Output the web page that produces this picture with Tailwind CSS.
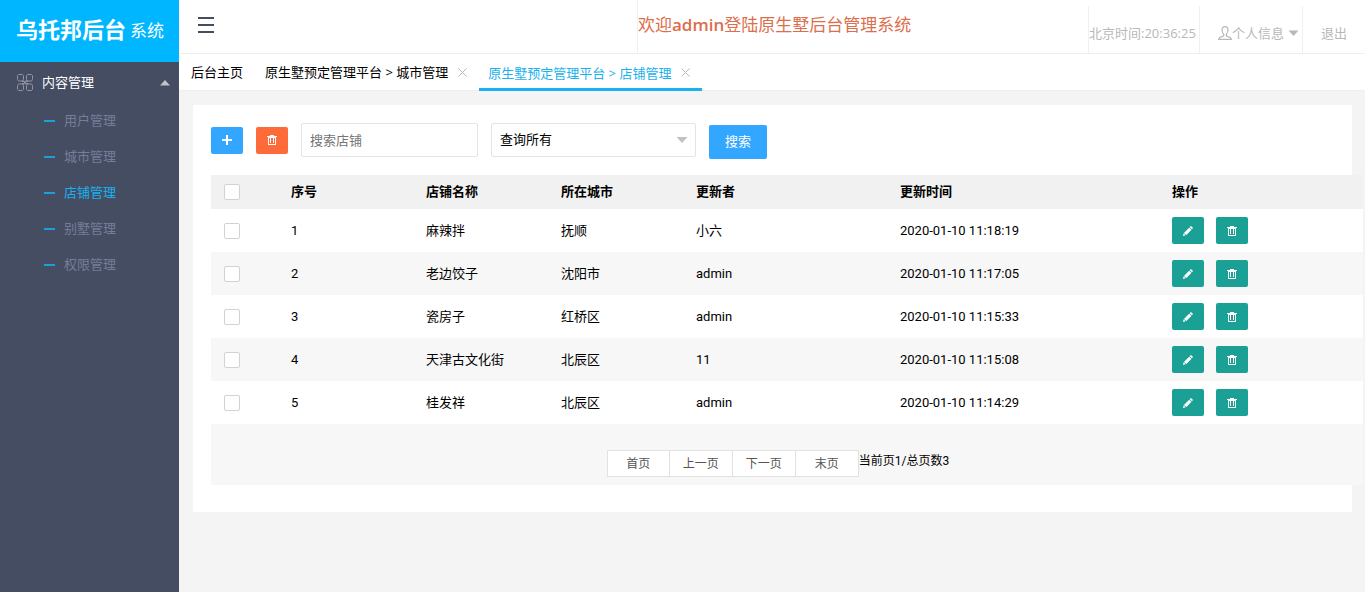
<!DOCTYPE html>
<html lang="zh-CN" class="h-full">
  <head>
    <meta charset="UTF-8" />
    <meta name="viewport" content="width=device-width, initial-scale=1.0" />
    <title>乌托邦后台系统</title>
    <script src="https://cdn.jsdelivr.net/npm/@tailwindcss/browser@4"></script>
  </head>
  <body
    class="flex min-h-full overflow-x-hidden bg-[#f4f4f4] font-[Roboto,'Noto_Sans_CJK_SC',sans-serif] text-[13px] leading-5 text-black"
  >
    <!-- icons -->
    <svg class="hidden" xmlns="http://www.w3.org/2000/svg">
      <symbol id="i-trash" viewBox="0 0 10 10">
        <path
          shape-rendering="crispEdges"
          fill="currentColor"
          fill-rule="evenodd"
          d="M3 0h4v1h3v1H9v8H1V2H0V1h3zM2 3v6h6V3zM3 3h1v5H3zM6 3h1v5H6z"
        />
      </symbol>
      <symbol id="i-pen" viewBox="0 0 10 10">
        <path
          fill="currentColor"
          d="M7.500.3C8.300-.2 10.200 1.500 9.800 2.300L9 3.300 6.600 1.200zM6.100 1.700l2.400 2.100L3.400 9 .9 6.900zM.6 7.300l2.100 2L0 10z"
        />
      </symbol>
      <symbol id="i-close" viewBox="0 0 9 9">
        <path d="M.5.5l8 8M8.500.5l-8 8" stroke="currentColor" fill="none" />
      </symbol>
    </svg>

    <aside class="w-[179px] shrink-0 bg-[#454d63]">
      <h1
        class="flex h-[62px] items-center bg-[#00b7ff] pl-4 text-[22px] font-bold whitespace-nowrap text-white"
      >
        乌托邦后台
        <span class="ml-1 text-[17px] font-normal">系统</span>
      </h1>
      <nav>
        <button
          type="button"
          class="flex h-[41px] w-full items-center pr-2 pl-[17px] text-white"
        >
          <svg
            class="h-[17px] w-[16px] text-[#9093a0]"
            viewBox="0 0 16 17"
            fill="none"
            stroke="currentColor"
          >
            <path
              d="M1.500.5h4l1 1v4l-1 1.500h-4l-1-1.500v-4zM10.500.5h4l1 1v4l-1 1.500h-4l-1-1.500v-4zM1.500 10h4l1 1.500v4l-1 1h-4l-1-1v-4zM10.500 10h4l1 1.500v4l-1 1h-4l-1-1v-4z"
            />
            <path d="M5 6.500h2.500v1h1v-1H11v1.500H9v1h2v1.500H8.500v-1h-1v1H5V9h2V8H5z" fill="currentColor" stroke="none" />
          </svg>
          <span class="ml-[9px]">内容管理</span>
          <svg class="ml-auto h-[6px] w-3" viewBox="0 0 12 6">
            <path d="M1 5.500L6 0l5 5.500z" fill="#c2c4ca" />
          </svg>
        </button>
        <ul class="text-[#767d98]">
          <li>
            <a href="#" class="flex h-9 items-center pl-11">
              <span class="mr-[9px] h-[2px] w-[11px] bg-[#1f9fd8]"></span>
              用户管理
            </a>
          </li>
          <li>
            <a href="#" class="flex h-9 items-center pl-11">
              <span class="mr-[9px] h-[2px] w-[11px] bg-[#1f9fd8]"></span>
              城市管理
            </a>
          </li>
          <li>
            <a href="#" class="flex h-9 items-center pl-11 text-[#19b1ee]">
              <span class="mr-[9px] h-[2px] w-[11px] bg-[#1f9fd8]"></span>
              店铺管理
            </a>
          </li>
          <li>
            <a href="#" class="flex h-9 items-center pl-11">
              <span class="mr-[9px] h-[2px] w-[11px] bg-[#1f9fd8]"></span>
              别墅管理
            </a>
          </li>
          <li>
            <a href="#" class="flex h-9 items-center pl-11">
              <span class="mr-[9px] h-[2px] w-[11px] bg-[#1f9fd8]"></span>
              权限管理
            </a>
          </li>
        </ul>
      </nav>
    </aside>

    <div class="min-w-0 flex-1">
      <header
        class="flex h-[54px] items-stretch border-b border-[#eeeeee] bg-white whitespace-nowrap"
      >
        <div class="flex w-[458px] items-center pb-[3px] pl-[19px]">
          <button type="button" aria-label="菜单">
            <svg class="h-4 w-4" viewBox="0 0 16 16">
              <path d="M0 0h16v2H0zM0 7h16v2H0zM0 14h16v2H0z" fill="#454d63" />
            </svg>
          </button>
        </div>
        <p
          class="flex items-center border-l border-[#f0f0f0] pb-[3px] font-['Open_Sans','Noto_Sans_CJK_SC',sans-serif] text-[17px] text-[#dc6e4b]"
        >
          欢迎<b class="font-semibold">admin</b>登陆原生墅后台管理系统
        </p>
        <div
          class="ml-auto flex items-stretch pt-[6px] font-['Open_Sans','Noto_Sans_CJK_SC',sans-serif] text-[#b8b8b8]"
        >
          <div
            class="flex w-[111px] items-center border-l border-[#f0f0f0] pt-[6px]"
          >
            北京时间:20:36:25
          </div>
          <a
            href="#"
            class="flex w-[104px] items-center border-x border-[#f0f0f0] pt-[6px] pl-[18px]"
          >
            <svg
              class="h-[14px] w-[14px]"
              viewBox="0 0 14 14"
              fill="none"
              stroke="currentColor"
              stroke-width="1.200"
            >
              <path
                d="M7 .7c2 0 3 1.300 3 3.400 0 1.800-.8 3.200-1.700 4.200v1.500l4.200 2 .8 1.500H.7l.8-1.500 4.200-2V8.300C4.800 7.300 4 5.900 4 4.100 4 2 5 .7 7 .7z"
              />
            </svg>
            个人信息
            <svg class="ml-1 h-[6px] w-[11px]" viewBox="0 0 11 6">
              <path d="M.5.5h10L5.500 6z" fill="#b8b8b8" />
            </svg>
          </a>
          <a href="#" class="flex w-[62px] items-center justify-center pt-[6px]">退出</a>
        </div>
      </header>

      <nav
        class="flex h-[37px] items-stretch border-b border-[#eeeeee] bg-white pl-[3px] font-['Open_Sans','Noto_Sans_CJK_SC',sans-serif] whitespace-nowrap"
      >
        <a href="#" class="flex items-center pr-[13px] pl-[9px]">后台主页</a>
        <div class="flex items-center pr-3 pl-[9px]">
          <a href="#">原生墅预定管理平台 &gt; 城市管理</a>
          <button type="button" class="ml-[10px] text-[#b8b8b8]" aria-label="关闭">
            <svg class="h-[9px] w-[9px]"><use href="#i-close" /></svg>
          </button>
        </div>
        <div
          class="-mb-px flex items-center bg-[linear-gradient(#19b1ee,#19b1ee)] bg-[length:100%_3px] bg-bottom bg-no-repeat pr-3 pl-[9px] text-[#19b1ee]"
        >
          <a href="#">原生墅预定管理平台 &gt; 店铺管理</a>
          <button type="button" class="ml-[10px] text-[#b8b8b8]" aria-label="关闭">
            <svg class="h-[9px] w-[9px]"><use href="#i-close" /></svg>
          </button>
        </div>
      </nav>

      <main class="mt-[14px] mr-[13px] ml-[14px] bg-white px-[18px] pt-[18px] pb-[27px]">
        <form class="flex h-9 items-end gap-[13px]">
          <div class="flex items-center gap-[13px] self-start">
            <button
              type="button"
              aria-label="添加"
              class="flex h-[27px] w-8 items-center justify-center rounded-[2px] bg-[#33a6ff] text-white"
            >
              <svg class="h-[10px] w-[10px]" viewBox="0 0 10 10">
                <path d="M4 0h2v4h4v2H6v4H4V6H0V4h4z" fill="currentColor" />
              </svg>
            </button>
            <button
              type="button"
              aria-label="批量删除"
              class="flex h-[27px] w-8 items-center justify-center rounded-[2px] bg-[#ff6a3a] text-white"
            >
              <svg class="h-[10px] w-[10px]"><use href="#i-trash" /></svg>
            </button>
            <input
              type="text"
              placeholder="搜索店铺"
              aria-label="搜索店铺"
              class="h-[34px] w-[177px] rounded-[2px] border border-[#e4e4e4] bg-white px-2 placeholder:text-[#757575]"
            />
            <div class="relative">
              <select
                aria-label="查询条件"
                class="h-[34px] w-[205px] appearance-none rounded-[2px] border border-[#e4e4e4] bg-white px-2"
              >
                <option>查询所有</option>
              </select>
              <svg
                class="pointer-events-none absolute top-[14px] right-2 h-[6px] w-3"
                viewBox="0 0 12 6"
              >
                <path d="M.5 0h11L6 6z" fill="#c2c2c2" />
              </svg>
            </div>
          </div>
          <button
            type="submit"
            class="h-[34px] w-[58px] rounded-[2px] bg-[#33a6ff] text-white"
          >
            搜索
          </button>
        </form>

        <!-- the table runs past the right edge of the card -->
        <div class="mt-4 -mr-[29px]">
          <table class="w-full table-fixed text-left">
            <colgroup>
              <col class="w-[68px]" />
              <col class="w-[135px]" />
              <col class="w-[135px]" />
              <col class="w-[135px]" />
              <col class="w-[204px]" />
              <col class="w-[272px]" />
              <col class="w-[203px]" />
            </colgroup>
            <thead>
              <tr class="h-[34px] bg-[#f1f1f1]">
                <th class="px-3">
                  <input type="checkbox" aria-label="全选" class="mx-px block h-4 w-4 appearance-none rounded-[2px] border border-[#d2d2d2] bg-white" />
                </th>
                <th class="px-3">序号</th>
                <th class="px-3">店铺名称</th>
                <th class="px-3">所在城市</th>
                <th class="px-3">更新者</th>
                <th class="px-3">更新时间</th>
                <th class="px-3">操作</th>
              </tr>
            </thead>
            <tbody id="shops"></tbody>
            <tfoot>
              <tr class="h-[61px] bg-[#f7f7f7]">
                <td colspan="7" class="pt-[18px]">
                  <div class="flex items-center justify-center pr-[18px] text-xs">
                    <button type="button" class="h-[27px] w-[63px] border border-[#e2e2e2] bg-white text-[#555555]">首页</button>
                    <button type="button" class="h-[27px] w-[63px] border border-l-0 border-[#e2e2e2] bg-white text-[#555555]">上一页</button>
                    <button type="button" class="h-[27px] w-[63px] border border-l-0 border-[#e2e2e2] bg-white text-[#555555]">下一页</button>
                    <button type="button" class="h-[27px] w-[63px] border border-l-0 border-[#e2e2e2] bg-white text-[#555555]">末页</button>
                    <span class="pb-[6px]">当前页1/总页数3</span>
                  </div>
                </td>
              </tr>
            </tfoot>
          </table>
        </div>
      </main>
    </div>

    <script>
      const shops = [
        ["1", "麻辣拌", "抚顺", "小六", "2020-01-10 11:18:19"],
        ["2", "老边饺子", "沈阳市", "admin", "2020-01-10 11:17:05"],
        ["3", "瓷房子", "红桥区", "admin", "2020-01-10 11:15:33"],
        ["4", "天津古文化街", "北辰区", "11", "2020-01-10 11:15:08"],
        ["5", "桂发祥", "北辰区", "admin", "2020-01-10 11:14:29"],
      ];
      document.querySelector("#shops").innerHTML = shops
        .map(
          (shop) => `
            <tr class="h-[43px] bg-white even:bg-[#f7f7f7]">
              <td class="px-3">
                <input type="checkbox" aria-label="选择${shop[1]}" class="mx-px block h-4 w-4 appearance-none rounded-[2px] border border-[#d2d2d2] bg-white" />
              </td>
              ${shop.map((text) => `<td class="px-3">${text}</td>`).join("")}
              <td class="px-3">
                <div class="flex gap-3">
                  <button type="button" aria-label="编辑" class="flex h-[27px] w-8 items-center justify-center rounded-[2px] bg-[#1aa094] text-white">
                    <svg class="h-[10px] w-[10px]"><use href="#i-pen" /></svg>
                  </button>
                  <button type="button" aria-label="删除" class="flex h-[27px] w-8 items-center justify-center rounded-[2px] bg-[#1aa094] text-white">
                    <svg class="h-[10px] w-[10px]"><use href="#i-trash" /></svg>
                  </button>
                </div>
              </td>
            </tr>`
        )
        .join("");
    </script>
  </body>
</html>
